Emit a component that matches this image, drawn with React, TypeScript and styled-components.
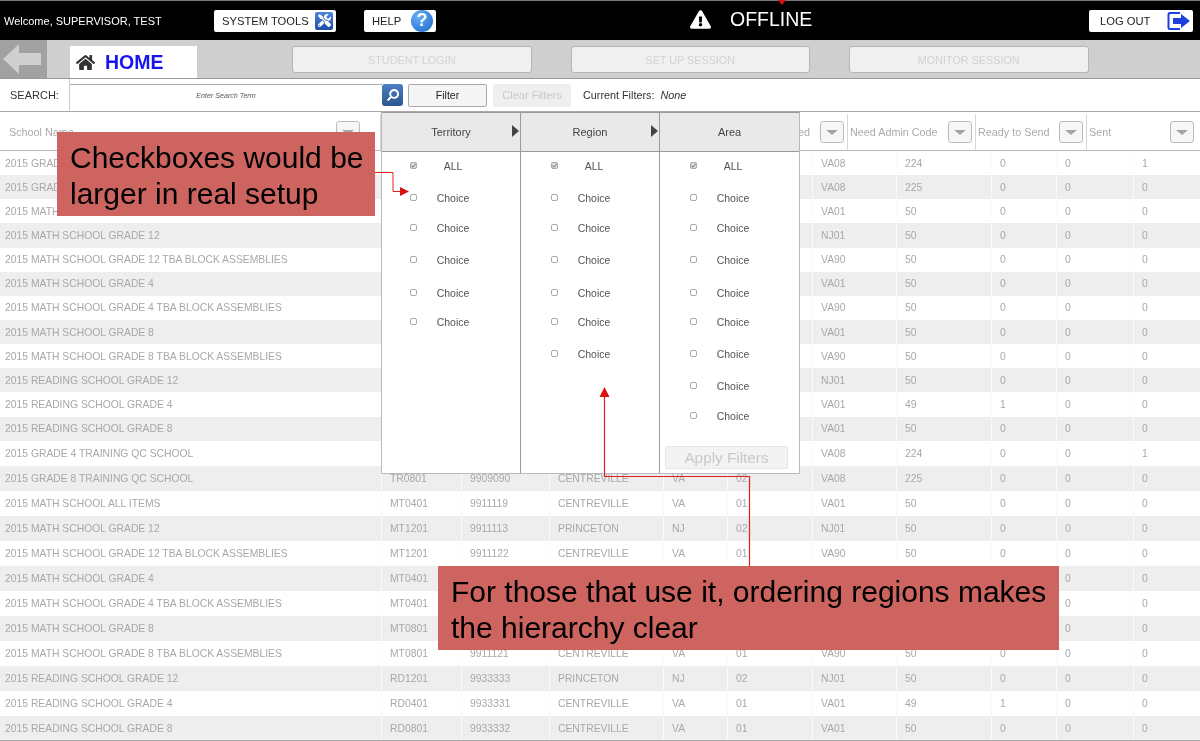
import React from "react"
import styled, { createGlobalStyle } from "styled-components"
import { FaHome, FaSearch, FaTools, FaExclamationTriangle } from "react-icons/fa"

const rows = [
    ["2015 GRADE 4 TRAINING QC SCHOOL", "TR0401", "9909089", "CENTREVILLE", "VA", "02", "VA08", "224", "0", "0", "1"],
    ["2015 GRADE 8 TRAINING QC SCHOOL", "TR0801", "9909090", "CENTREVILLE", "VA", "02", "VA08", "225", "0", "0", "0"],
    ["2015 MATH SCHOOL ALL ITEMS", "MT0401", "9911119", "CENTREVILLE", "VA", "01", "VA01", "50", "0", "0", "0"],
    ["2015 MATH SCHOOL GRADE 12", "MT1201", "9911113", "PRINCETON", "NJ", "02", "NJ01", "50", "0", "0", "0"],
    ["2015 MATH SCHOOL GRADE 12 TBA BLOCK ASSEMBLIES", "MT1201", "9911122", "CENTREVILLE", "VA", "01", "VA90", "50", "0", "0", "0"],
    ["2015 MATH SCHOOL GRADE 4", "MT0401", "9911112", "CENTREVILLE", "VA", "01", "VA01", "50", "0", "0", "0"],
    ["2015 MATH SCHOOL GRADE 4 TBA BLOCK ASSEMBLIES", "MT0401", "9911120", "CENTREVILLE", "VA", "01", "VA90", "50", "0", "0", "0"],
    ["2015 MATH SCHOOL GRADE 8", "MT0801", "9911114", "CENTREVILLE", "VA", "01", "VA01", "50", "0", "0", "0"],
    ["2015 MATH SCHOOL GRADE 8 TBA BLOCK ASSEMBLIES", "MT0801", "9911121", "CENTREVILLE", "VA", "01", "VA90", "50", "0", "0", "0"],
    ["2015 READING SCHOOL GRADE 12", "RD1201", "9933333", "PRINCETON", "NJ", "02", "NJ01", "50", "0", "0", "0"],
    ["2015 READING SCHOOL GRADE 4", "RD0401", "9933331", "CENTREVILLE", "VA", "01", "VA01", "49", "1", "0", "0"],
    ["2015 READING SCHOOL GRADE 8", "RD0801", "9933332", "CENTREVILLE", "VA", "01", "VA01", "50", "0", "0", "0"],
]

const panels = [
    { title: "Territory", arrow: true, inset: 28, gaps: [12, 10, 12, 13, 9] },
    { title: "Region", arrow: true, inset: 30, gaps: [12, 10, 12, 13, 9, 12] },
    { title: "Area", arrow: false, inset: 30, gaps: [12, 10, 12, 13, 9, 12, 12, 10] },
]

const headers = [
    { label: "School Name", right: false },
    { label: "Tested", right: true },
    { label: "Need Admin Code", right: false },
    { label: "Ready to Send", right: false },
    { label: "Sent", right: false },
]

export default function App() {
    return (
        <>
            <GlobalStyle />
            <Page>
                <TopBar>
                    <Welcome>Welcome, SUPERVISOR, TEST</Welcome>
                    <TopButton $width={122}>
                        SYSTEM TOOLS
                        <ToolsIcon><FaTools size={13} /></ToolsIcon>
                    </TopButton>
                    <TopButton $width={72} $gap={28}>
                        HELP
                        <HelpIcon>?</HelpIcon>
                    </TopButton>
                    <Offline>
                        <FaExclamationTriangle size={21} />
                        <span>OFFLINE</span>
                    </Offline>
                    <LogOut>
                        LOG OUT
                        <svg width="24" height="20" viewBox="0 0 24 20">
                            <path d="M13 2H3a1.5 1.5 0 0 0-1.5 1.5v13A1.5 1.5 0 0 0 3 18h10" fill="none" stroke="#1c3fe0" strokeWidth="2" />
                            <path d="M6 7h8V3l9 7-9 7v-4H6z" fill="#1c3fe0" />
                        </svg>
                    </LogOut>
                </TopBar>

                <NavBar>
                    <BackTab>
                        <svg width="40" height="30" viewBox="0 0 40 30">
                            <path d="M1 15 17 0v9h22v12H17v9z" fill="#cfcfcf" />
                        </svg>
                    </BackTab>
                    <HomeTab>
                        <FaHome size={19} color="#333" />
                        <span>HOME</span>
                    </HomeTab>
                    <NavButtons>
                        <NavButton>STUDENT LOGIN</NavButton>
                        <NavButton>SET UP SESSION</NavButton>
                        <NavButton>MONITOR SESSION</NavButton>
                    </NavButtons>
                </NavBar>

                <SearchBar>
                    <SearchLabel>SEARCH:</SearchLabel>
                    <SearchInput>Enter Search Term</SearchInput>
                    <SearchButton><FaSearch size={12} /></SearchButton>
                    <FilterButton>Filter</FilterButton>
                    <ClearButton>Clear Filters</ClearButton>
                    <CurrentFilters>Current Filters: <em>None</em></CurrentFilters>
                </SearchBar>

                <HeaderRow>
                    {headers.map((h) => (
                        <HeaderCell key={h.label} $right={h.right}>
                            <span>{h.label}</span>
                            <SortButton />
                        </HeaderCell>
                    ))}
                </HeaderRow>

                {[...rows, ...rows].map((row, i) => (
                    <Row key={i} $odd={i % 2 === 1} $tall={i >= 12}>
                        {row.map((value, j) => (
                            <Cell key={j} $first={j === 0}>{value}</Cell>
                        ))}
                    </Row>
                ))}

                <FilterMenu>
                    {panels.map((panel) => (
                        <Panel key={panel.title}>
                            <PanelHead>
                                {panel.title}
                                {panel.arrow && <PanelArrow />}
                            </PanelHead>
                            <Choices $inset={panel.inset}>
                                <ChoiceRow $gap={4}>
                                    <Check $checked>
                                        <svg width="7" height="7" viewBox="0 0 7 7">
                                            <path d="M1.2 3.4 3 5.2 5.8 1.6" fill="none" stroke="#777" strokeWidth="1" />
                                        </svg>
                                    </Check>
                                    <ChoiceLabel>ALL</ChoiceLabel>
                                </ChoiceRow>
                                {panel.gaps.map((gap, i) => (
                                    <ChoiceRow key={i} $gap={gap}>
                                        <Check />
                                        <ChoiceLabel>Choice</ChoiceLabel>
                                    </ChoiceRow>
                                ))}
                            </Choices>
                            {panel.title === "Area" && <ApplyButton>Apply Filters</ApplyButton>}
                        </Panel>
                    ))}
                </FilterMenu>

                <Arrows width="1200" height="741" viewBox="0 0 1200 741">
                    <path d="M778 0h8l-4 5z" fill="#d8120c" />
                    <path d="M375 172.5h18v19h8" fill="none" stroke="#e0201a" strokeWidth="1" />
                    <path d="M400 187l9 4.500-9 4.500z" fill="#d8120c" />
                    <path d="M749.500 566V476.500H604.500V396" fill="none" stroke="#e0201a" strokeWidth="1.200" />
                    <path d="M604.500 387l5 10h-10z" fill="#d8120c" />
                </Arrows>

                <CalloutChecks>Checkboxes would be larger in real setup</CalloutChecks>
                <CalloutRegions>For those that use it, ordering regions makes the hierarchy clear</CalloutRegions>
            </Page>
        </>
    )
}

const GlobalStyle = createGlobalStyle`
html, body {
    margin: 0;
    padding: 0;
    background: #fff;
    font-family: "Liberation Sans", Arial, sans-serif;
}
*{
    box-sizing: border-box;
}
`
const Page = styled.div`
position: relative;
width: 1200px;
height: 741px;
overflow: hidden;
background: #fff;
border-bottom: 1px solid #aaa;
filter: blur(0.3px);
`
const TopBar = styled.div`
height: 40px;
background-color: #000;
border-top: 1px solid #777;
display: flex;
align-items: center;
`
const Welcome = styled.div`
width: 214px;
padding-left: 4px;
color: #fff;
font-size: 11px;
`
const TopButton = styled.div<{ $width: number; $gap?: number }>`
width: ${(p) => p.$width}px;
height: 22px;
margin-left: ${(p) => p.$gap ?? 0}px;
padding: 0 3px 0 8px;
background: #fff;
border-radius: 2px;
font-size: 11.200px;
color: #222;
display: flex;
justify-content: space-between;
align-items: center;
`
const ToolsIcon = styled.div`
width: 18px;
height: 18px;
background: linear-gradient(#4f86d8, #1c4ea6);
border-radius: 2px;
color: #fff;
display: flex;
justify-content: center;
align-items: center;
`
const HelpIcon = styled.div`
width: 22px;
height: 22px;
border-radius: 50%;
background: radial-gradient(circle at 35% 30%, #6db2f5, #1463c8);
color: #fff;
font-size: 18px;
font-weight: 700;
display: flex;
justify-content: center;
align-items: center;
`
const Offline = styled.div`
margin-left: 254px;
margin-top: -2px;
color: #fff;
display: flex;
align-items: center;
gap: 19px;
font-size: 19.500px;
`
const LogOut = styled.div`
width: 104px;
height: 22px;
margin-left: auto;
margin-right: 7px;
padding: 0 2px 0 11px;
background: #fff;
border-radius: 2px;
font-size: 11.200px;
color: #222;
display: flex;
justify-content: space-between;
align-items: center;
`
const NavBar = styled.div`
height: 39px;
background-color: #cfcfcf;
border-bottom: 1px solid #999;
display: flex;
`
const BackTab = styled.div`
width: 47px;
padding-right: 4px;
background-color: #a1a1a1;
display: flex;
justify-content: center;
align-items: center;
`
const HomeTab = styled.div`
width: 127px;
height: 32px;
margin: 6px 0 0 23px;
padding-left: 6px;
background-color: #fff;
display: flex;
align-items: center;
gap: 10px;
span{
    color: #1616f0;
    font-size: 19.500px;
    font-weight: 700;
}
`
const NavButtons = styled.div`
margin: 6px 0 0 95px;
display: flex;
gap: 39px;
`
const NavButton = styled.div`
width: 239.500px;
height: 27px;
background-color: #f0f0f0;
border: 1px solid #b5b5b5;
border-radius: 3px;
color: #d2d2d2;
font-size: 10.800px;
display: flex;
justify-content: center;
align-items: center;
`
const SearchBar = styled.div`
height: 33px;
border-bottom: 1px solid #aaa;
display: flex;
align-items: center;
`
const SearchLabel = styled.div`
width: 70px;
height: 100%;
padding-left: 10px;
border-right: 1px solid #ccc;
color: #333;
font-size: 11px;
display: flex;
align-items: center;
`
const SearchInput = styled.div`
width: 312px;
height: 23px;
border-top: 1px solid #aaa;
color: #555;
font-size: 7.100px;
font-style: italic;
display: flex;
justify-content: center;
align-items: center;
`
const SearchButton = styled.div`
width: 21px;
height: 22px;
background: linear-gradient(#4d7fc4, #2a558f);
border-radius: 3px;
color: #fff;
display: flex;
justify-content: center;
align-items: center;
svg{
    transform: scaleX(-1);
}
`
const FilterButton = styled.div`
width: 79px;
height: 23px;
margin-left: 5px;
background-color: #f5f5f5;
border: 1px solid #aaa;
border-radius: 2px;
color: #222;
font-size: 10.500px;
display: flex;
justify-content: center;
align-items: center;
`
const ClearButton = styled.div`
width: 78px;
height: 23px;
margin-left: 6px;
background-color: #efefef;
border-radius: 2px;
color: #c9c9c9;
font-size: 11px;
display: flex;
justify-content: center;
align-items: center;
`
const CurrentFilters = styled.div`
margin-left: 12px;
color: #333;
font-size: 10.800px;
white-space: pre;
em{
    margin-left: 3px;
}
`
const HeaderRow = styled.div`
height: 39px;
padding-top: 2px;
border-bottom: 1px solid #bbb;
display: grid;
grid-template-columns: 381px 467px 128px 111px 113px;
`
const HeaderCell = styled.div<{ $right: boolean }>`
padding: 0 3px 0 2px;
border-right: 1px solid #d5d5d5;
color: #aaa;
font-size: 10.800px;
display: flex;
align-items: center;
justify-content: ${(p) => (p.$right ? "flex-end" : "space-between")};
gap: ${(p) => (p.$right ? 10 : 6)}px;
&:first-child{
    padding: 0 20px 0 9px;
}
&:last-child{
    padding-right: 6px;
    border-right: none;
}
`
const SortButton = styled.div`
width: 24px;
height: 22px;
background-color: #f6f6f6;
border: 1px solid #bbb;
border-radius: 3px;
display: flex;
justify-content: center;
align-items: center;
&::after{
    content: "";
    border-left: 6px solid transparent;
    border-right: 6px solid transparent;
    border-top: 5px solid #a5a5a5;
}
`
const Row = styled.div<{ $odd: boolean; $tall: boolean }>`
height: ${(p) => (p.$tall ? 25 : 24.15)}px;
background-color: ${(p) => (p.$odd ? "#eeeeee" : "#fff")};
display: grid;
grid-template-columns: 381px 80px 88px 114px 64px 85px 84px 95px 65px 77px 67px;
`
const Cell = styled.div<{ $first: boolean }>`
padding-left: ${(p) => (p.$first ? 5 : 8)}px;
border-left: ${(p) => (p.$first ? "none" : "1px solid #fafafa")};
color: #a8a8a8;
font-size: 10.350px;
white-space: nowrap;
display: flex;
align-items: center;
`
const FilterMenu = styled.div`
position: absolute;
left: 381px;
top: 112px;
width: 419px;
height: 362px;
background-color: #fff;
border: 1px solid #bbb;
border-top-color: #999;
display: grid;
grid-template-columns: 139px 139px 1fr;
`
const Panel = styled.div`
border-right: 1px solid #999;
display: flex;
flex-direction: column;
&:last-child{
    border-right: none;
}
`
const PanelHead = styled.div`
position: relative;
height: 39px;
flex-shrink: 0;
background-color: #e9e9e9;
border-bottom: 1px solid #999;
color: #444;
font-size: 11px;
display: flex;
justify-content: center;
align-items: center;
`
const PanelArrow = styled.div`
position: absolute;
right: 1px;
top: 12px;
border-top: 6px solid transparent;
border-bottom: 6px solid transparent;
border-left: 7px solid #444;
`
const Choices = styled.div<{ $inset: number }>`
padding-left: ${(p) => p.$inset}px;
display: flex;
flex-direction: column;
`
const ChoiceRow = styled.div<{ $gap: number }>`
height: 20px;
margin-top: ${(p) => p.$gap}px;
display: flex;
align-items: center;
gap: 5px;
`
const Check = styled.div<{ $checked?: boolean }>`
width: 7px;
height: 7px;
margin-top: -1px;
background-color: ${(p) => (p.$checked ? "#dcdcdc" : "#fff")};
border: 1px solid #aaa;
border-radius: 2px;
display: flex;
justify-content: center;
align-items: center;
svg{
    flex-shrink: 0;
}
`
const ChoiceLabel = styled.div`
width: 60px;
margin-left: 1px;
color: #555;
font-size: 10.500px;
text-align: center;
`
const ApplyButton = styled.div`
width: 123px;
height: 23px;
margin: 20px 0 0 5px;
background-color: #f3f3f3;
border: 1px solid #e6e6e6;
border-radius: 2px;
color: #c9c9c9;
font-size: 15.300px;
display: flex;
justify-content: center;
align-items: center;
`
const Arrows = styled.svg`
position: absolute;
left: 0;
top: 0;
pointer-events: none;
`
const CalloutChecks = styled.div`
position: absolute;
left: 57px;
top: 132px;
width: 318px;
height: 84px;
padding: 8px 4px 0 13px;
background-color: #cd645f;
color: #000;
font-size: 30px;
line-height: 36px;
`
const CalloutRegions = styled.div`
position: absolute;
left: 438px;
top: 566px;
width: 621px;
height: 84px;
padding: 8px 8px 0 13px;
background-color: #cd645f;
color: #000;
font-size: 30px;
line-height: 36px;
`
